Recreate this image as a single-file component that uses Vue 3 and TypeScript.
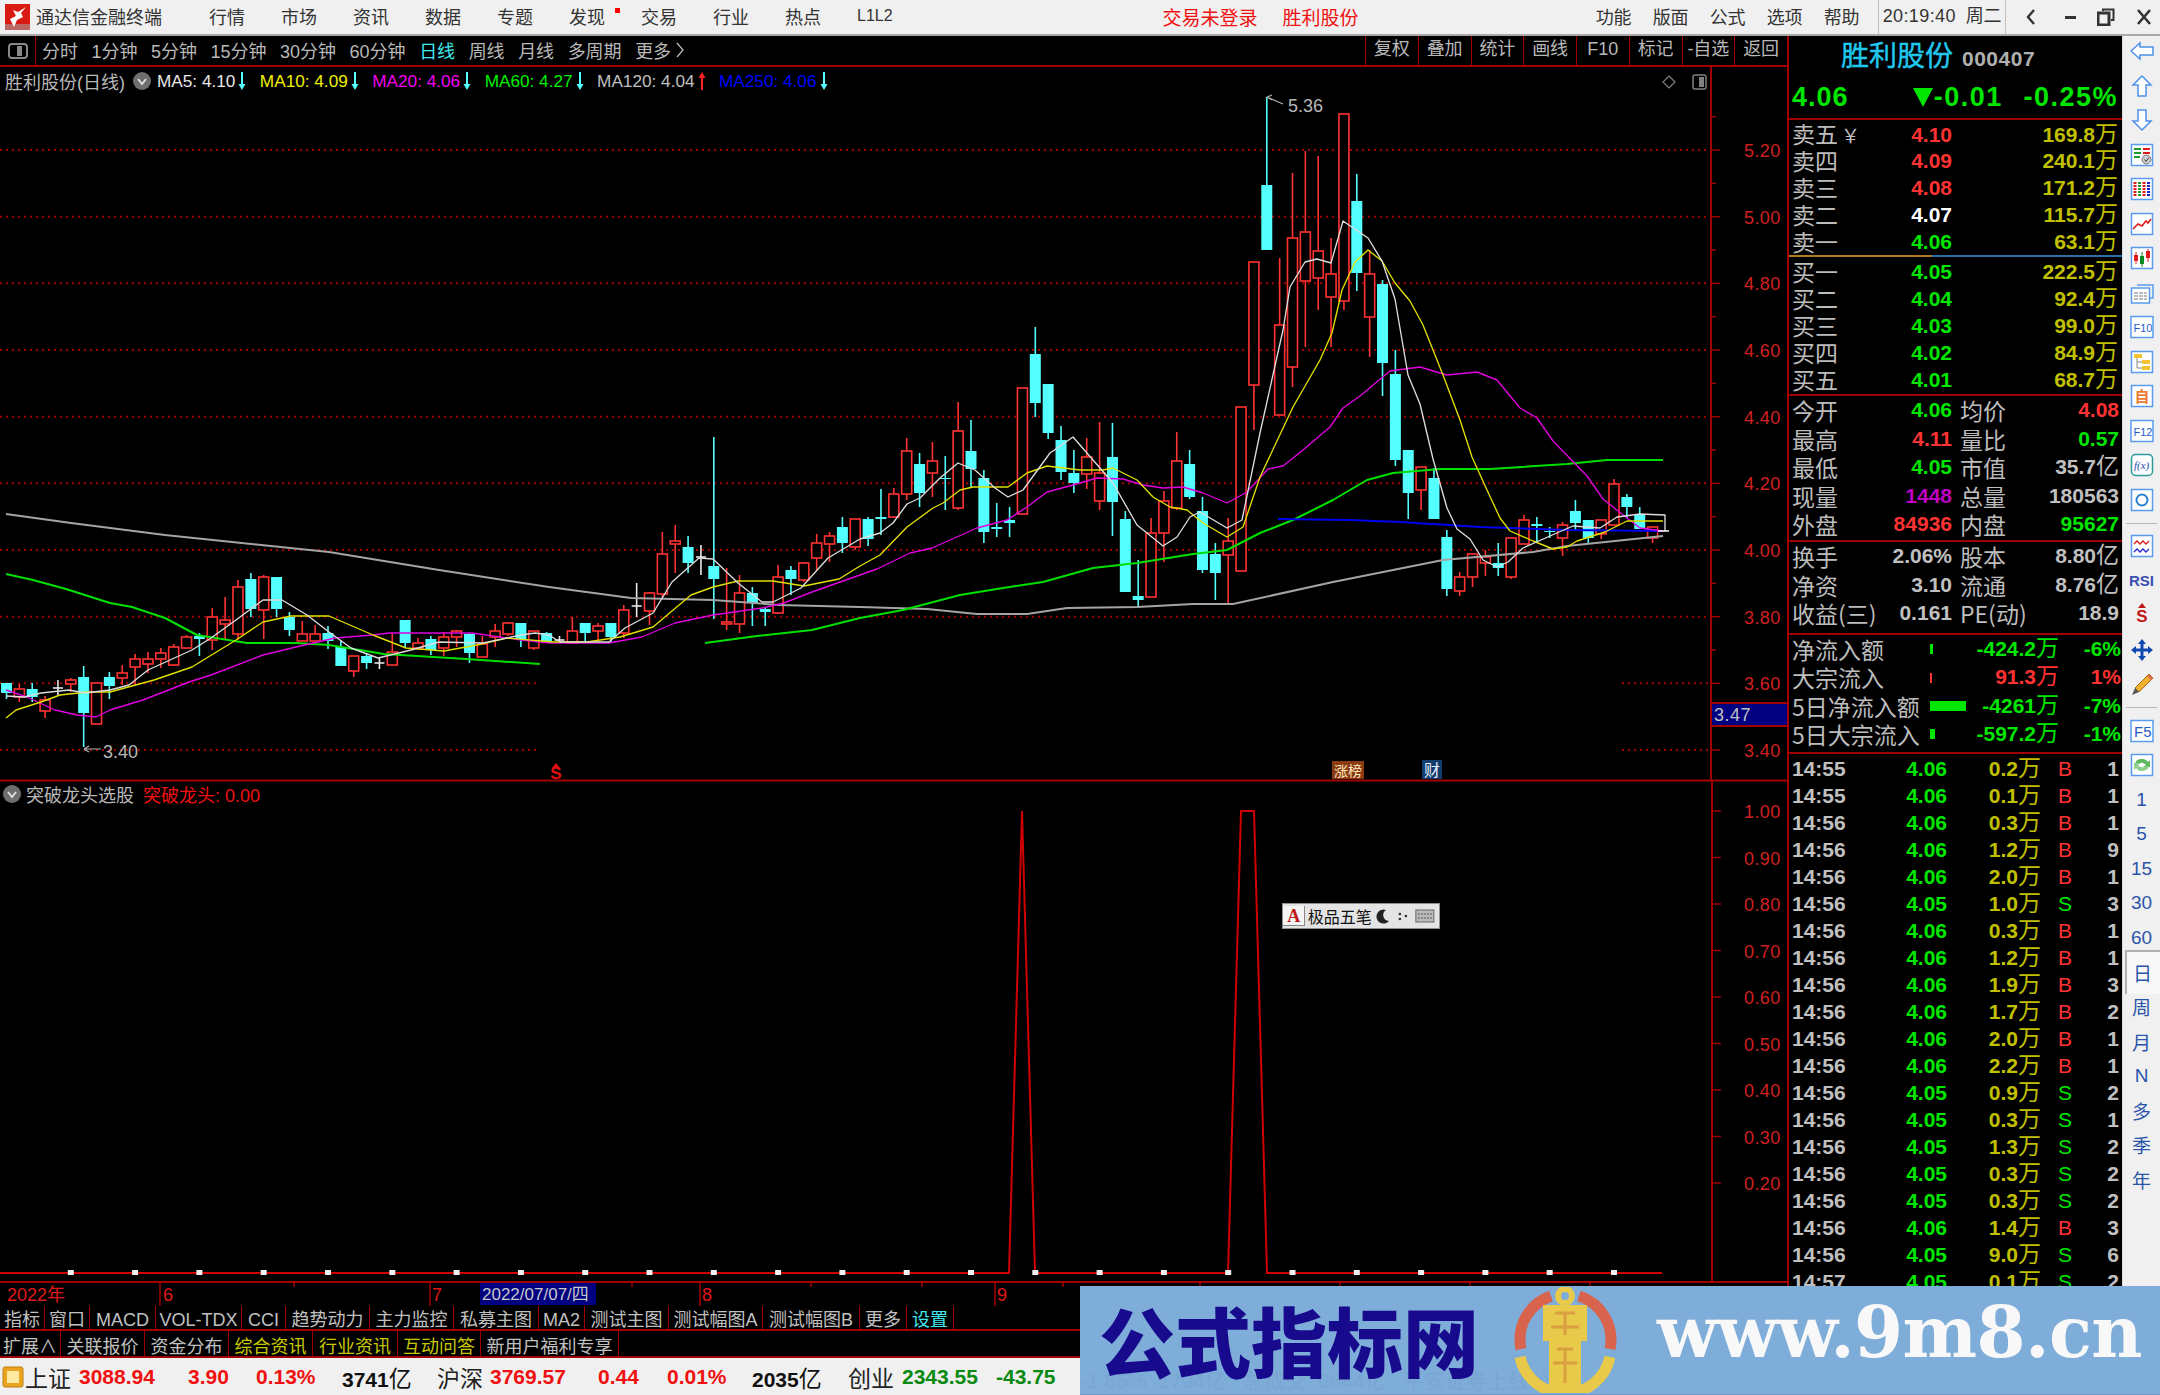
<template>
  <div class="app">
    <header class="titlebar">
      <svg class="logo" viewBox="0 0 25 26">
        <rect width="25" height="26" fill="#d81a12" />
        <rect y="20" width="25" height="6" fill="#a8a8a8" opacity=".55" />
        <path d="M21 3 L13 8 L8 6 L11 12 L5 15 L9 23 L12 16 L18 13 L16 9 Z" fill="#fff" />
      </svg>
      <span class="apptitle">通达信金融终端</span>
      <nav class="menu">
        <span v-for="m in menus" :key="m" class="menu-item">{{ m }}<i v-if="m === '发现'" class="dot" /></span>
        <span class="menu-item l1">L1L2</span>
      </nav>
      <span class="notice first">交易未登录</span>
      <span class="notice">胜利股份</span>
      <nav class="menu right">
        <span v-for="m in rightMenus" :key="m" class="menu-item">{{ m }}</span>
      </nav>
      <span class="clock">20:19:40</span>
      <span class="week">周二</span>
      <div class="winbtns">
        <svg viewBox="0 0 12 18"><path d="M9 2 L3 9 L9 16" fill="none" stroke="#333" stroke-width="2.4" /></svg>
        <svg viewBox="0 0 12 18"><rect x="0" y="8" width="11" height="3" fill="#333" /></svg>
        <svg viewBox="0 0 18 18"><rect x="1" y="5" width="11" height="12" fill="none" stroke="#333" stroke-width="3" /><path d="M6 3 V1.5 H16.5 V12 H14" fill="none" stroke="#333" stroke-width="2" /></svg>
        <svg viewBox="0 0 16 18"><path d="M2 2 L14 16 M14 2 L2 16" stroke="#333" stroke-width="2.6" /></svg>
      </div>
    </header>

    <div class="body">
      <section class="left">
        <div class="strip">
          <div class="strip-icon"><svg viewBox="0 0 20 16"><rect x="1" y="1" width="18" height="14" rx="3" fill="none" stroke="#888" stroke-width="2" /><rect x="9" y="3" width="5" height="10" fill="#888" /></svg></div>
          <div class="periods">
            <span v-for="p in periods" :key="p" :class="{ on: p === '日线' }">{{ p }}</span>
            <span class="more">更多<svg viewBox="0 0 8 16"><path d="M1 1 L7 8 L1 15" fill="none" stroke="#b8b8b8" stroke-width="1.3" /></svg></span>
          </div>
          <div class="tools">
            <span v-for="t in tools" :key="t">{{ t }}</span>
          </div>
        </div>

        <div class="chart">
          <svg class="plot" viewBox="0 67 1787 1239" width="1787" height="1239">
            <!-- price grid -->
            <line v-for="g in gridFull" :key="g" x1="0" :y1="g" x2="1710" :y2="g" class="dots" />
            <template v-for="g in gridPart" :key="g">
              <line x1="0" :y1="g" x2="540" :y2="g" class="dots" />
              <line x1="1622" :y1="g" x2="1710" :y2="g" class="dots" />
            </template>

            <!-- candles -->
            <g v-for="c in candles" :key="c.i">
              <template v-if="c.t === 'u'">
                <line :x1="c.x" :y1="c.h" :x2="c.x" :y2="c.top" class="wick-u" />
                <line :x1="c.x" :y1="c.bot" :x2="c.x" :y2="c.l" class="wick-u" />
                <rect :x="c.x - 5" :y="c.top" width="10" :height="c.bot - c.top" class="body-u" />
              </template>
              <template v-else-if="c.t === 'd'">
                <line :x1="c.x" :y1="c.h" :x2="c.x" :y2="c.l" class="wick-d" />
                <rect :x="c.x - 5.5" :y="c.top" width="11" :height="c.bot - c.top" class="body-d" />
              </template>
              <template v-else>
                <line :x1="c.x" :y1="c.h" :x2="c.x" :y2="c.l" class="wick-w" />
                <line :x1="c.x - 5" :y1="c.top" :x2="c.x + 5" :y2="c.top" class="wick-w" />
              </template>
            </g>

            <!-- moving averages -->
            <polyline class="ma thick" stroke="#a4a4a4" :points="ma120a" />
            <polyline class="ma thick" stroke="#00e000" :points="ma60a" />
            <polyline class="ma thick" stroke="#00e000" :points="ma60b" />
            <polyline class="ma thick" stroke="#0000f0" :points="ma250" />
            <polyline class="ma" stroke="#e000e0" :points="ma20" />
            <polyline class="ma" stroke="#e0e000" :points="ma10" />
            <polyline class="ma" stroke="#dcdcdc" :points="ma5" />
            <line x1="1658" y1="531" x2="1669" y2="531" stroke="#fff" stroke-width="1.5" />

            <!-- high / low labels -->
            <path d="M1267 97 L1283 104 M1267 97 l5 -2 M1267 97 l5 3" stroke="#b0b0b0" stroke-width="1.2" fill="none" />
            <text x="1288" y="112" class="note">5.36</text>
            <path d="M84 749 H101 M84 749 l5 -3 M84 749 l5 3" stroke="#b0b0b0" stroke-width="1.2" fill="none" />
            <text x="103" y="758" class="note">3.40</text>

            <!-- event markers -->
            <path d="M556 763 l4 5 h-8 z" fill="#e01010" />
            <text x="556" y="779" class="dollar">S</text>
            <rect x="1332" y="761" width="32" height="18" fill="#8a3a10" />
            <text x="1334" y="776" class="evt evt-up">涨榜</text>
            <rect x="1422" y="760" width="20" height="19" fill="#123c6c" />
            <text x="1424" y="776" class="evt evt-cai">财</text>

            <!-- top right chart icons -->
            <path d="M1669 76 l6 6 l-6 6 l-6 -6 z" fill="none" stroke="#808080" stroke-width="1.2" />
            <rect x="1693" y="75" width="13" height="14" rx="2" fill="none" stroke="#808080" stroke-width="1.5" />
            <rect x="1699" y="77" width="5" height="10" fill="#808080" />

            <!-- price axis -->
            <line x1="1711" y1="67" x2="1711" y2="780" class="axis" />
            <line v-for="t in priceTicks" :key="t.y" x1="1711" :y1="t.y" :x2="t.major ? 1720 : 1716" :y2="t.y" class="axis-thin" />
            <text v-for="t in priceLabels" :key="t.t" x="1744" :y="t.y + 7" class="axis-label">{{ t.t }}</text>
            <rect x="1712" y="703" width="75" height="23" fill="#000080" />
            <line x1="1712" y1="703" x2="1787" y2="703" class="axis" />
            <line x1="1712" y1="726" x2="1787" y2="726" class="axis" />
            <text x="1714" y="721" class="flag">3.47</text>

            <line x1="0" y1="780.5" x2="1787" y2="780.5" class="axis" />

            <!-- indicator pane -->
            <line x1="1712" y1="781" x2="1712" y2="1282" class="axis" />
            <line v-for="t in indLabels" :key="t.t" x1="1712" :y1="t.y" x2="1721" :y2="t.y" class="axis-thin" />
            <text v-for="t in indLabels" :key="'l' + t.t" x="1744" :y="t.y + 7" class="axis-label">{{ t.t }}</text>
            <polyline :points="indLine" fill="none" stroke="#d00000" stroke-width="2" />
            <rect v-for="x in indMarks" :key="x" :x="x - 3" y="1270" width="6" height="5" fill="#f0f0f0" />

            <!-- time axis -->
            <line x1="0" y1="1282" x2="1787" y2="1282" class="axis" />
            <line v-for="x in timeSeps" :key="x" :x1="x" y1="1282" :x2="x" y2="1306" class="axis-thin" />
            <line v-for="x in timeTicks" :key="x" :x1="x" y1="1282" :x2="x" y2="1287" class="axis-thin" />
            <text x="7" y="1301" class="time">2022年</text>
            <text x="163" y="1301" class="time">6</text>
            <text x="432" y="1301" class="time">7</text>
            <rect x="480" y="1283" width="116" height="22" fill="#000080" />
            <text x="482" y="1300" class="date">2022/07/07/四</text>
            <text x="702" y="1301" class="time">8</text>
            <text x="997" y="1301" class="time">9</text>
          </svg>

          <div class="legend">
            <span class="stock">胜利股份(日线)</span>
            <svg class="chev" viewBox="0 0 18 18"><circle cx="9" cy="9" r="9" fill="#6e6e6e" /><path d="M5 7 L9 12 L13 7" fill="none" stroke="#ddd" stroke-width="2" /></svg>
            <span v-for="m in mas" :key="m.t" class="ma-item" :style="{ color: m.c }">
              {{ m.t }}
              <svg class="arr" viewBox="0 0 8 20"><path v-if="m.up" d="M4 1 L7.5 7 H5 V19 H3 V7 H.5 Z" fill="#ff2020" /><path v-else d="M3 1 H5 V13 H7.5 L4 19 L.5 13 H3 Z" fill="#54ffff" /></svg>
            </span>
          </div>

          <div class="ind-title">
            <svg class="chev" viewBox="0 0 18 18"><circle cx="9" cy="9" r="9" fill="#6e6e6e" /><path d="M5 7 L9 12 L13 7" fill="none" stroke="#ddd" stroke-width="2" /></svg>
            <span class="stock">突破龙头选股</span>
            <span class="ind-val">突破龙头: 0.00</span>
          </div>

          <div class="ime">
            <b class="ime-a">A</b>
            <span class="ime-t">极品五笔</span>
            <svg viewBox="0 0 14 18"><path d="M9 3 a7 7 0 1 0 3 11 a6 6 0 0 1 -3 -11 Z" fill="#222" /></svg>
            <svg viewBox="0 0 14 18"><circle cx="4" cy="7" r="1.3" fill="#333" /><circle cx="4" cy="12" r="1.3" fill="#333" /><circle cx="10" cy="9" r="1.3" fill="#333" /></svg>
            <svg class="ime-k" viewBox="0 0 20 16"><rect x="1" y="2" width="18" height="12" fill="#bbb" stroke="#666" /><path d="M3 6 H17 M3 10 H17" stroke="#555" stroke-dasharray="2 1" /></svg>
          </div>
        </div>

        <div class="tabs first">
          <span v-for="t in tabsA" :key="t.t" class="tab" :class="t.c" :style="{ width: t.w + 'px' }">{{ t.t }}</span>
        </div>
        <div class="tabs second">
          <span v-for="t in tabsB" :key="t.t" class="tab" :class="t.c" :style="{ width: t.w + 'px' }">{{ t.t }}</span>
        </div>
      </section>

      <aside class="panel">
        <div class="head">
          <span class="name">胜利股份</span>
          <span class="code">000407</span>
        </div>
        <div class="quote sec">
          <span class="q1">4.06</span>
          <span class="q2"><i class="tri" />-0.01</span>
          <span class="q3">-0.25%</span>
        </div>

        <div class="book">
          <div v-for="r in sells" :key="r.l" class="book-row">
            <span class="lab">{{ r.l }}<em v-if="r.l === '卖五'" class="yen">￥</em></span>
            <span class="num" :class="r.c">{{ r.p }}</span>
            <span class="num y">{{ r.v }}<span class="u">万</span></span>
          </div>
        </div>
        <div class="midline" />
        <div class="book pad sec">
          <div v-for="r in buys" :key="r.l" class="book-row">
            <span class="lab">{{ r.l }}</span>
            <span class="num g">{{ r.p }}</span>
            <span class="num y">{{ r.v }}<span class="u">万</span></span>
          </div>
        </div>

        <div class="stats s1 sec">
          <div v-for="r in statsA" :key="r[0]" class="stat-row">
            <span class="lab">{{ r[0] }}</span>
            <span class="num" :class="r[2]">{{ r[1] }}</span>
            <span class="lab l2">{{ r[3] }}</span>
            <span class="num" :class="r[5]">{{ r[4] }}<span v-if="r[6]" class="u">{{ r[6] }}</span></span>
          </div>
        </div>
        <div class="stats s2 sec">
          <div v-for="r in statsB" :key="r[0]" class="stat-row">
            <span class="lab">{{ r[0] }}</span>
            <span class="num" :class="r[2]">{{ r[1] }}</span>
            <span class="lab l2">{{ r[3] }}</span>
            <span class="num" :class="r[5]">{{ r[4] }}<span v-if="r[6]" class="u">{{ r[6] }}</span></span>
          </div>
        </div>

        <div class="flows sec">
          <div v-for="r in flows" :key="r.l" class="flow-row">
            <span class="lab">{{ r.l }}</span>
            <span class="bar-cell"><i :class="r.c === 'r' ? 'bar-r' : 'bar-g'" :style="{ width: r.b + 'px' }" /></span>
            <span class="num" :class="r.c">{{ r.v }}<span class="u">万</span></span>
            <span class="num" :class="r.c">{{ r.p }}</span>
          </div>
        </div>

        <div class="ticks">
          <div v-for="(r, i) in ticks" :key="i" class="tick-row">
            <span class="num gy">{{ r[0] }}</span>
            <span class="num g">{{ r[1] }}</span>
            <span class="num y">{{ r[2] }}<span class="u">万</span></span>
            <span class="bs" :class="r[3] === 'B' ? 'r' : 'g'">{{ r[3] }}</span>
            <span class="num gy">{{ r[4] }}</span>
          </div>
        </div>
      </aside>

      <aside class="toolbar">
        <div class="it"><svg class="ic" viewBox="0 0 24 24"><polygon points="1,12 10,4 10,8 23,8 23,16 10,16 10,20" class="arrow" /></svg></div>
        <div class="it"><svg class="ic" viewBox="0 0 24 24"><polygon points="12,2 21,11 16,11 16,22 8,22 8,11 3,11" class="arrow" /></svg></div>
        <div class="it"><svg class="ic" viewBox="0 0 24 24"><polygon points="12,22 21,13 16,13 16,2 8,2 8,13 3,13" class="arrow" /></svg></div>
        <div class="it"><svg class="ic" viewBox="0 0 24 24"><rect x="1.5" y="1.5" width="21" height="21" class="frame" /><path d="M4 6 H11 M4 10 H11 M4 14 H10" stroke="#1a9a2a" stroke-width="2" /><path d="M13 6 H20 M13 10 H20" stroke="#e01a1a" stroke-width="2" /><circle cx="16.5" cy="16.5" r="4.5" fill="#ccc" stroke="#777" /><path d="M14.5 16.5 l1.5 2 l3 -4" stroke="#444" fill="none" /></svg></div>
        <div class="it"><svg class="ic" viewBox="0 0 24 24"><rect x="1.5" y="1.5" width="21" height="21" class="frame" /><path d="M5 5 V19" stroke="#e01a1a" stroke-width="3" stroke-dasharray="2 1" /><path d="M9.5 5 V19" stroke="#1a9a2a" stroke-width="3" stroke-dasharray="2 1" /><path d="M14 5 V19" stroke="#e01a1a" stroke-width="3" stroke-dasharray="2 1" /><path d="M18.5 5 V19" stroke="#2020d0" stroke-width="3" stroke-dasharray="2 1" /></svg></div>
        <div class="it"><svg class="ic" viewBox="0 0 24 24"><rect x="1.5" y="1.5" width="21" height="21" class="frame" /><path d="M3 17 L8 12 L12 14 L16 9 L18 11 L21 7" fill="none" stroke="#e01a1a" stroke-width="1.6" /></svg></div>
        <div class="it"><svg class="ic" viewBox="0 0 24 24"><rect x="1.5" y="1.5" width="21" height="21" class="frame" /><path d="M6 6 V18 M18 3 V16" stroke="#e01a1a" /><path d="M12 6 V21" stroke="#0a8a20" /><rect x="4" y="9" width="4" height="6" fill="#e01a1a" /><rect x="10" y="10" width="4" height="8" fill="#0a8a20" /><rect x="16" y="5" width="4" height="7" fill="#e01a1a" /></svg></div>
        <div class="it"><svg class="ic" viewBox="0 0 24 24"><path d="M7 4 H23 V17 H20" fill="none" stroke="#5a9bf0" stroke-width="1.5" /><rect x="1.5" y="7" width="18" height="15" class="frame" /><path d="M4 12 H17 M4 15 H17 M4 18 H17" stroke="#777" stroke-dasharray="4 1" /></svg></div>
        <div class="it"><svg class="ic" viewBox="0 0 24 24"><rect x="1" y="1.5" width="22" height="21" class="frame" /><text x="3.5" y="17" class="ic-t">F10</text></svg></div>
        <div class="it"><svg class="ic" viewBox="0 0 24 24"><rect x="1.5" y="1.5" width="21" height="21" class="frame" /><path d="M7 7 V18 H12 M7 12 H12" stroke="#888" fill="none" /><rect x="4" y="4" width="8" height="4" fill="#f4c330" /><rect x="12" y="10" width="8" height="4" fill="#f4c330" /><rect x="12" y="16" width="8" height="4" fill="#f4c330" /></svg></div>
        <div class="it"><svg class="ic" viewBox="0 0 24 24"><rect x="1.5" y="1.5" width="21" height="21" class="frame" /><text x="4.5" y="18" class="ic-z">自</text></svg></div>
        <div class="it"><svg class="ic" viewBox="0 0 24 24"><rect x="1" y="1.5" width="22" height="21" class="frame" /><text x="3.5" y="17" class="ic-t">F12</text></svg></div>
        <div class="it"><svg class="ic" viewBox="0 0 24 24"><rect x="1.5" y="1.5" width="21" height="21" rx="4" fill="#fff" stroke="#2a9a9a" stroke-width="1.5" /><text x="4" y="16" class="ic-f">f(x)</text></svg></div>
        <div class="it"><svg class="ic" viewBox="0 0 24 24"><rect x="1.5" y="1.5" width="21" height="21" class="frame" /><circle cx="12" cy="12" r="5.5" fill="none" stroke="#2a80d0" stroke-width="2" /></svg></div>
        <div class="sep" />
        <div class="it"><svg class="ic" viewBox="0 0 24 24"><rect x="1.5" y="1.5" width="21" height="21" class="frame" /><path d="M4 10 l3 -3 l3 3 l3 -3 l3 3 l3 -3" fill="none" stroke="#e01a1a" stroke-width="1.4" /><path d="M4 18 l3 -3 l3 3 l3 -3 l3 3 l3 -3" fill="none" stroke="#2a2ad0" stroke-width="1.4" /></svg></div>
        <div class="it"><span class="rsi">RSI</span></div>
        <div class="it"><svg class="ic" viewBox="0 0 24 24"><path d="M12 0 l4 5 h-8 z" fill="#c01818" /><text x="12" y="19" class="ic-s">S</text></svg></div>
        <div class="it"><svg class="ic" viewBox="0 0 24 24"><path d="M12 1 l4 5 h-2.5 v4.5 h4.5 v-2.5 l5 4 l-5 4 v-2.5 h-4.5 v4.5 h2.5 l-4 5 l-4 -5 h2.5 v-4.5 h-4.5 v2.5 l-5 -4 l5 -4 v2.5 h4.5 v-4.5 h-2.5 z" fill="#1048b0" /></svg></div>
        <div class="it"><svg class="ic" viewBox="0 0 24 24"><path d="M19 2 L23 6 L9 20 L5 16 Z" fill="#f0b030" stroke="#a06a10" /><path d="M5 16 L2 23 L9 20 Z" fill="#555" /><path d="M19 2 L23 6 L21 8 L17 4 Z" fill="#e06a50" /></svg></div>
        <div class="sep" />
        <div class="it"><svg class="ic" viewBox="0 0 24 24"><rect x="1" y="1.5" width="22" height="21" class="frame" /><text x="4" y="18" class="ic-t big">F5</text></svg></div>
        <div class="it"><svg class="ic" viewBox="0 0 24 24"><rect x="1.5" y="1.5" width="21" height="21" class="frame" /><path d="M5 11 a7 6 0 0 1 13 -2 l2 -2 v7 h-7 l3 -2 a5 4 0 0 0 -8 -1 z" fill="#5cb85c" /><path d="M19 13 a7 6 0 0 1 -13 2 l-2 2 v-7 h7 l-3 2 a5 4 0 0 0 8 1 z" fill="#8ed08e" /></svg></div>
        <div v-for="t in tbText" :key="t" class="it txt" :class="{ active: t === '日' }">{{ t }}</div>
      </aside>
    </div>

    <footer class="status">
      <svg class="st-ic" viewBox="0 0 22 22"><rect x="1" y="1" width="20" height="20" rx="2" fill="#eaa520" stroke="#c08010" /><rect x="5" y="5" width="12" height="12" fill="#ffe9a0" /></svg>
      <span v-for="s in statusItems" :key="s.t" class="st" :class="s.c" :style="{ width: s.w + 'px' }">{{ s.t }}<span v-if="s.u" class="st-u">{{ s.u }}</span></span>
    </footer>

    <div class="wm">
      <span class="wm-ghost">-1.85%&#160;&#160;1794亿&#160;&#160;&#160;总成交&#160;&#160;6644亿&#160;&#160;&#160;平安证券上线公告</span>
      <span class="wm-cn">公式指标网</span>
      <svg class="wm-logo" viewBox="0 0 104 106">
        <path d="M 8 62 A 46 46 0 0 1 38 9" fill="none" stroke="#d8644e" stroke-width="11" />
        <path d="M 66 9 A 46 46 0 0 1 97 62" fill="none" stroke="#d8644e" stroke-width="11" />
        <path d="M 7 70 A 46 46 0 0 0 97 70" fill="none" stroke="#e8c94a" stroke-width="11" />
        <circle cx="52" cy="9" r="7" fill="none" stroke="#e8c94a" stroke-width="6" />
        <rect x="30" y="18" width="44" height="36" fill="#e8c94a" />
        <rect x="36" y="54" width="32" height="48" fill="#e8c94a" />
        <path d="M42 26 H62 M52 26 V48 M38 40 H66 M44 62 H60 M52 62 V96 M40 76 H64" stroke="#d9a040" stroke-width="3" />
      </svg>
      <span class="wm-url">www.9m8.cn</span>
    </div>
  </div>
</template>

<script setup lang="ts">
const menus = ['行情', '市场', '资讯', '数据', '专题', '发现', '交易', '行业', '热点']
const rightMenus = ['功能', '版面', '公式', '选项', '帮助']
const periods = ['分时', '1分钟', '5分钟', '15分钟', '30分钟', '60分钟', '日线', '周线', '月线', '多周期']
const tools = ['复权', '叠加', '统计', '画线', 'F10', '标记', '-自选', '返回']

const mas = [
  { t: 'MA5: 4.10', c: '#e8e8e8', up: false },
  { t: 'MA10: 4.09', c: '#f0f000', up: false },
  { t: 'MA20: 4.06', c: '#f000f0', up: false },
  { t: 'MA60: 4.27', c: '#00f000', up: false },
  { t: 'MA120: 4.04', c: '#c0c0c0', up: true },
  { t: 'MA250: 4.06', c: '#0000ff', up: false },
]

// top, bottom, high, low, type - pixel rows read off the reference
const raw: [number, number, number, number, string][] = [
  [683, 693, 683, 699, 'd'], [689, 697, 684, 702, 'u'], [689, 697, 683, 702, 'd'], [700, 711, 696, 718, 'u'],
  [688, 688, 680, 695, 'w'], [680, 684, 678, 692, 'u'], [677, 713, 666, 747, 'd'], [683, 724, 683, 724, 'u'],
  [677, 686, 672, 699, 'd'], [673, 678, 665, 685, 'u'], [659, 667, 654, 685, 'u'], [659, 664, 652, 673, 'u'],
  [653, 659, 648, 668, 'u'], [647, 665, 644, 666, 'u'], [637, 648, 635, 649, 'u'], [636, 639, 633, 656, 'd'],
  [617, 640, 608, 650, 'u'], [620, 624, 597, 640, 'u'], [587, 634, 580, 640, 'u'], [579, 609, 573, 617, 'd'],
  [577, 610, 575, 639, 'u'], [577, 609, 577, 617, 'd'], [617, 630, 612, 636, 'd'], [634, 641, 621, 641, 'u'],
  [634, 641, 625, 641, 'u'], [633, 641, 626, 649, 'd'], [647, 666, 640, 666, 'd'], [656, 671, 656, 677, 'u'],
  [656, 663, 653, 669, 'd'], [663, 663, 658, 669, 'w'], [652, 665, 633, 665, 'u'], [620, 643, 620, 647, 'd'],
  [643, 648, 638, 650, 'u'], [639, 650, 636, 655, 'd'], [637, 648, 632, 656, 'u'], [631, 637, 630, 647, 'u'],
  [634, 653, 633, 663, 'd'], [644, 657, 636, 657, 'u'], [631, 637, 624, 647, 'u'], [623, 634, 622, 636, 'u'],
  [623, 639, 623, 647, 'd'], [631, 648, 631, 650, 'u'], [633, 643, 632, 643, 'd'], [640, 640, 636, 643, 'w'],
  [631, 643, 617, 643, 'u'], [623, 633, 623, 643, 'd'], [626, 631, 623, 643, 'u'], [623, 637, 623, 643, 'd'],
  [610, 633, 605, 638, 'u'], [606, 606, 583, 617, 'w'], [593, 611, 592, 625, 'u'], [554, 594, 532, 597, 'u'],
  [541, 544, 525, 573, 'u'], [547, 563, 536, 573, 'd'], [557, 557, 545, 575, 'w'], [566, 579, 437, 619, 'd'],
  [622, 624, 568, 630, 'u'], [593, 624, 575, 633, 'u'], [593, 603, 587, 626, 'd'], [609, 612, 607, 626, 'd'],
  [577, 613, 565, 614, 'u'], [570, 579, 566, 595, 'd'], [563, 580, 562, 582, 'u'], [543, 558, 534, 570, 'u'],
  [536, 544, 532, 562, 'u'], [527, 543, 517, 553, 'd'], [519, 547, 519, 550, 'u'], [519, 539, 517, 546, 'd'],
  [517, 519, 489, 535, 'd'], [494, 517, 488, 518, 'u'], [451, 494, 438, 500, 'u'], [464, 493, 453, 507, 'd'],
  [461, 473, 442, 497, 'u'], [478, 479, 456, 510, 'd'], [431, 508, 402, 510, 'u'], [451, 469, 420, 487, 'd'],
  [478, 532, 470, 543, 'd'], [527, 529, 503, 537, 'd'], [520, 523, 507, 537, 'd'], [388, 514, 388, 514, 'u'],
  [354, 403, 327, 417, 'd'], [384, 433, 384, 439, 'd'], [440, 472, 426, 480, 'd'], [473, 483, 450, 493, 'd'],
  [457, 474, 438, 489, 'u'], [473, 501, 422, 510, 'u'], [457, 502, 423, 536, 'd'], [519, 592, 511, 592, 'd'],
  [596, 600, 560, 606, 'd'], [533, 597, 518, 597, 'u'], [501, 533, 491, 562, 'u'], [461, 508, 432, 510, 'u'],
  [464, 497, 450, 499, 'd'], [511, 570, 497, 573, 'd'], [554, 573, 543, 600, 'd'], [541, 555, 518, 603, 'u'],
  [407, 571, 407, 571, 'u'], [262, 385, 262, 430, 'u'], [185, 250, 97, 250, 'd'], [325, 415, 258, 415, 'u'],
  [238, 367, 173, 387, 'u'], [232, 281, 151, 347, 'u'], [251, 278, 156, 310, 'u'], [274, 297, 238, 347, 'u'],
  [114, 301, 114, 310, 'u'], [201, 273, 174, 291, 'd'], [274, 317, 250, 357, 'u'], [284, 363, 280, 396, 'd'],
  [374, 460, 350, 466, 'd'], [450, 493, 450, 519, 'd'], [467, 490, 467, 510, 'u'], [478, 519, 468, 519, 'd'],
  [537, 589, 530, 596, 'd'], [577, 591, 572, 596, 'u'], [554, 577, 554, 587, 'u'], [557, 563, 550, 576, 'u'],
  [563, 568, 543, 576, 'd'], [538, 577, 538, 579, 'u'], [520, 544, 515, 544, 'u'], [524, 526, 517, 542, 'd'],
  [531, 532, 527, 538, 'd'], [525, 538, 522, 556, 'u'], [511, 523, 500, 530, 'd'], [520, 538, 520, 543, 'd'],
  [520, 534, 520, 539, 'u'], [484, 525, 479, 525, 'u'], [497, 507, 494, 518, 'd'], [514, 529, 507, 529, 'd'],
  [527, 538, 527, 543, 'u'],
]
const candles = raw.map((r, i) => ({
  i, x: 6.5 + 12.86 * i, top: r[0], bot: r[1], h: r[2], l: r[3], t: r[4],
}))

const ma5 = '6,696 25,697 41,693 69,690 85,693 110,690 129,685 148,670 192,650 211,638 236,620 263,600 282,600 307,615 329,632 351,648 378,658 411,650 439,642 483,643 521,635 535,633 549,635 560,642 609,642 625,628 653,613 672,582 699,558 713,559 738,583 762,602 773,602 801,588 828,558 860,539 880,533 893,523 907,504 920,498 940,478 958,463 975,470 995,488 1008,497 1023,490 1050,453 1073,437 1093,460 1113,483 1137,525 1163,546 1177,537 1190,517 1200,512 1227,528 1242,520 1260,433 1283,330 1290,287 1305,262 1317,259 1331,263 1343,221 1368,238 1382,261 1395,299 1408,375 1420,404 1433,459 1447,508 1457,529 1470,539 1483,560 1497,567 1508,562 1523,548 1550,536 1573,526 1600,528 1617,517 1640,514 1665,515 1665,531'
const ma10 = '6,718 16,710 41,702 60,695 88,692 110,692 154,680 192,667 236,640 263,622 291,616 329,616 373,635 406,648 444,651 477,645 507,638 554,642 587,642 620,637 653,627 691,595 713,587 738,581 773,581 804,586 839,579 860,566 880,555 907,527 933,508 943,503 960,490 973,487 1008,487 1027,473 1047,466 1080,470 1103,470 1113,468 1137,480 1153,497 1170,507 1187,510 1203,523 1227,537 1243,527 1260,477 1293,407 1320,360 1332,333 1342,290 1355,262 1368,250 1382,261 1395,283 1410,301 1423,325 1443,375 1460,420 1472,457 1487,490 1500,518 1510,531 1533,541 1553,549 1567,547 1577,541 1605,532 1627,521 1663,521'
const ma20 = '6,690 27,697 55,710 77,715 96,717 110,710 143,700 189,682 211,675 263,655 296,647 335,638 373,635 389,633 472,633 521,640 549,643 609,643 642,637 675,623 713,615 762,608 784,603 812,592 860,575 877,569 910,553 932,548 977,528 1007,520 1027,507 1047,492 1073,485 1097,478 1123,479 1143,485 1163,488 1183,487 1203,493 1227,503 1247,492 1268,469 1283,466 1303,450 1330,427 1343,408 1360,396 1390,371 1420,367 1447,375 1477,372 1497,380 1520,408 1537,418 1553,441 1587,476 1603,499 1627,518 1640,528 1663,531'
const ma60a = '6,574 33,580 66,589 110,603 132,607 165,618 197,635 247,643 296,643 329,645 384,654 466,659 540,664'
const ma60b = '705,643 757,636 812,630 860,618 903,610 960,595 1003,588 1043,582 1093,568 1137,563 1193,554 1227,550 1260,533 1293,520 1333,500 1367,480 1393,473 1440,469 1490,469 1567,464 1607,460 1663,460'
const ma120a = '6,514 71,523 165,535 329,552 439,570 549,587 631,598 713,600 779,605 860,607 927,609 977,614 1027,614 1067,608 1137,607 1193,604 1233,604 1333,582 1443,560 1533,552 1567,546 1663,536'
const ma250 = '1278,519 1350,520 1400,522 1480,527 1567,530 1663,531'

const yOf = (p: number) => 550 - (p - 4) * 333.3
const gridFull = [5.2, 5, 4.8, 4.6, 4.4, 4.2, 4, 3.8].map(yOf)
const gridPart = [3.6, 3.4].map(yOf)
const priceLabels = [5.2, 5, 4.8, 4.6, 4.4, 4.2, 4, 3.8, 3.6, 3.4].map((p) => ({ t: p.toFixed(2), y: yOf(p) }))
const priceTicks = Array.from({ length: 20 }, (_, i) => ({ y: yOf(5.3 - i * 0.1), major: i % 2 === 1 }))
const indLabels = [1, 0.9, 0.8, 0.7, 0.6, 0.5, 0.4, 0.3, 0.2].map((v) => ({ t: v.toFixed(2), y: 811 + (1 - v) * 465 }))
const indLine = '0,1273 1009,1273 1022,811 1035,1273 1228,1273 1241,811 1254,811 1267,1273 1662,1273'
const indMarks = Array.from({ length: 25 }, (_, k) => 6.5 + 64.3 * (k + 1))
const timeSeps = [160, 430, 700, 995]
const timeTicks = [294, 632, 811, 922, 1063, 1200, 1340, 1470, 1590]

const sepsToWidths = (labels: string[], seps: number[]) =>
  labels.map((t, i) => ({
    t,
    w: seps[i] - (i ? seps[i - 1] : 0),
    c: t === '设置' ? 'cy' : ['综合资讯', '行业资讯', '互动问答'].includes(t) ? 'ye' : '',
  }))
const tabsA = sepsToWidths(
  ['指标', '窗口', 'MACD', 'VOL-TDX', 'CCI', '趋势动力', '主力监控', '私募主图', 'MA2', '测试主图', '测试幅图A', '测试幅图B', '更多', '设置'],
  [45, 90, 156, 242, 286, 370, 454, 539, 585, 669, 763, 860, 907, 954],
)
const tabsB = sepsToWidths(
  ['扩展∧', '关联报价', '资金分布', '综合资讯', '行业资讯', '互动问答', '新用户福利专享'],
  [61, 145, 229, 313, 398, 481, 619],
)

const sells = [
  { l: '卖五', p: '4.10', c: 'r', v: '169.8' },
  { l: '卖四', p: '4.09', c: 'r', v: '240.1' },
  { l: '卖三', p: '4.08', c: 'r', v: '171.2' },
  { l: '卖二', p: '4.07', c: 'w', v: '115.7' },
  { l: '卖一', p: '4.06', c: 'g', v: '63.1' },
]
const buys = [
  { l: '买一', p: '4.05', v: '222.5' },
  { l: '买二', p: '4.04', v: '92.4' },
  { l: '买三', p: '4.03', v: '99.0' },
  { l: '买四', p: '4.02', v: '84.9' },
  { l: '买五', p: '4.01', v: '68.7' },
]
const statsA = [
  ['今开', '4.06', 'g', '均价', '4.08', 'r', ''],
  ['最高', '4.11', 'r', '量比', '0.57', 'g', ''],
  ['最低', '4.05', 'g', '市值', '35.7', 'gy', '亿'],
  ['现量', '1448', 'm', '总量', '180563', 'gy', ''],
  ['外盘', '84936', 'r', '内盘', '95627', 'g', ''],
]
const statsB = [
  ['换手', '2.06%', 'gy', '股本', '8.80', 'gy', '亿'],
  ['净资', '3.10', 'gy', '流通', '8.76', 'gy', '亿'],
  ['收益(三)', '0.161', 'gy', 'PE(动)', '18.9', 'gy', ''],
]
const flows = [
  { l: '净流入额', b: 3, v: '-424.2', p: '-6%', c: 'g' },
  { l: '大宗流入', b: 2, v: '91.3', p: '1%', c: 'r' },
  { l: '5日净流入额', b: 36, v: '-4261', p: '-7%', c: 'g' },
  { l: '5日大宗流入', b: 5, v: '-597.2', p: '-1%', c: 'g' },
]
const ticks = [
  ['14:55', '4.06', '0.2', 'B', '1'], ['14:55', '4.06', '0.1', 'B', '1'], ['14:56', '4.06', '0.3', 'B', '1'],
  ['14:56', '4.06', '1.2', 'B', '9'], ['14:56', '4.06', '2.0', 'B', '1'], ['14:56', '4.05', '1.0', 'S', '3'],
  ['14:56', '4.06', '0.3', 'B', '1'], ['14:56', '4.06', '1.2', 'B', '1'], ['14:56', '4.06', '1.9', 'B', '3'],
  ['14:56', '4.06', '1.7', 'B', '2'], ['14:56', '4.06', '2.0', 'B', '1'], ['14:56', '4.06', '2.2', 'B', '1'],
  ['14:56', '4.05', '0.9', 'S', '2'], ['14:56', '4.05', '0.3', 'S', '1'], ['14:56', '4.05', '1.3', 'S', '2'],
  ['14:56', '4.05', '0.3', 'S', '2'], ['14:56', '4.05', '0.3', 'S', '2'], ['14:56', '4.06', '1.4', 'B', '3'],
  ['14:56', '4.05', '9.0', 'S', '6'], ['14:57', '4.05', '0.1', 'S', '2'],
]

const tbText = ['1', '5', '15', '30', '60', '日', '周', '月', 'N', '多', '季', '年']

const stRaw = [
  { x: 25, t: '上证', c: 'st-l' },
  { x: 79, t: '3088.94', c: 'st-r' },
  { x: 188, t: '3.90', c: 'st-r' },
  { x: 256, t: '0.13%', c: 'st-r' },
  { x: 342, t: '3741', u: '亿', c: 'st-k' },
  { x: 437, t: '沪深', c: 'st-l' },
  { x: 490, t: '3769.57', c: 'st-r' },
  { x: 598, t: '0.44', c: 'st-r' },
  { x: 667, t: '0.01%', c: 'st-r' },
  { x: 752, t: '2035', u: '亿', c: 'st-k' },
  { x: 848, t: '创业', c: 'st-l' },
  { x: 902, t: '2343.55', c: 'st-g' },
  { x: 996, t: '-43.75', c: 'st-g' },
  { x: 1081, t: '-1.85%', c: 'st-g' },
]
const statusItems = stRaw.map((s, i) => ({ ...s, w: (stRaw[i + 1]?.x ?? 1160) - s.x }))
</script>

<style scoped>
.app {
  position: relative;
  width: 2160px;
  height: 1395px;
  overflow: hidden;
  display: flex;
  flex-direction: column;
  background: #000;
  font-family: "Liberation Sans", "Noto Sans CJK SC", sans-serif;
  color: #c0c0c0;
}

/* title bar */
.titlebar {
  height: 34px;
  flex: none;
  display: flex;
  align-items: center;
  background: #f0f0f0;
  border-bottom: 2px solid #a8a8a8;
  color: #333;
  font-size: 18px;
}
.titlebar > span, .titlebar > nav { margin-top: -2px; }
.logo { width: 25px; height: 26px; margin-left: 5px; flex: none; }
.apptitle { margin-left: 6px; width: 126px; white-space: nowrap; }
.menu { display: flex; gap: 36px; margin-left: 47px; }
.menu.right { gap: 21px; margin-left: 237px; }
.menu-item { position: relative; white-space: nowrap; }
.menu-item.l1 { font-size: 16px; line-height: 26px; }
.dot { position: absolute; left: 46px; top: 5px; width: 5px; height: 5px; background: #f00; }
.notice { color: #f01010; font-size: 19px; margin-left: 25px; white-space: nowrap; }
.notice.first { margin-left: 270px; }
.clock { margin-left: 18px; padding-left: 4px; border-left: 1px solid #c0c0c0; line-height: 36px; width: 83px; letter-spacing: .4px; }
.week { width: 39px; line-height: 36px; border-right: 1px solid #c0c0c0; }
.winbtns { flex: 1; display: flex; align-items: center; }
.winbtns svg { height: 18px; }
.winbtns svg:nth-child(1) { width: 12px; margin-left: 19px; }
.winbtns svg:nth-child(2) { width: 12px; margin-left: 28px; }
.winbtns svg:nth-child(3) { width: 18px; margin-left: 20px; }
.winbtns svg:nth-child(4) { width: 16px; margin-left: 21px; }

.body { flex: 1; min-height: 0; display: flex; }

/* left part */
.left { width: 1787px; flex: none; display: flex; flex-direction: column; }
.strip {
  height: 29px;
  flex: none;
  display: flex;
  align-items: stretch;
  border-bottom: 2px solid #a00000;
  font-size: 18px;
  color: #b8b8b8;
  white-space: nowrap;
}
.strip-icon { width: 35px; flex: none; border-right: 1px solid #a00000; display: flex; align-items: center; justify-content: center; }
.strip-icon svg { width: 20px; height: 16px; }
.periods { display: flex; gap: 13.5px; align-items: center; padding-left: 6px; padding-bottom: 2px; }
.periods .on { color: #40e8f0; }
.more { display: flex; align-items: center; gap: 5px; }
.more svg { width: 8px; height: 16px; }
.tools { margin-left: auto; display: flex; }
.tools span { width: 52.75px; border-left: 1px solid #a00000; text-align: center; line-height: 27px; box-sizing: border-box; }

.chart { position: relative; height: 1239px; flex: none; }
.plot { display: block; }
.dots { stroke: #a00000; stroke-width: 2; stroke-dasharray: 2 4; }
.wick-u { stroke: #ff3232; stroke-width: 1.6; }
.wick-d { stroke: #54ffff; stroke-width: 1.6; }
.wick-w { stroke: #e8e8e8; stroke-width: 1.6; }
.body-u { fill: #000; stroke: #ff3232; stroke-width: 1.6; }
.body-d { fill: #54ffff; }
.ma { fill: none; stroke-width: 1.35; stroke-linejoin: round; }
.ma.thick { stroke-width: 2; }
.note { fill: #b8b8b8; font-size: 18px; }
.dollar { fill: #e01010; font-size: 17px; font-weight: 700; text-anchor: middle; }
.evt { font-size: 14px; font-family: "Noto Sans CJK SC", sans-serif; }
.evt-up { fill: #ffe8c0; }
.evt-cai { fill: #e8f0ff; font-size: 16px; }
.axis { stroke: #a00000; stroke-width: 2; }
.axis-thin { stroke: #a00000; stroke-width: 1.5; }
.axis-label { fill: #d02020; font-size: 18px; letter-spacing: .4px; }
.flag { fill: #c0c0c0; font-size: 18px; letter-spacing: .5px; }
.time { fill: #e01818; font-size: 18px; font-family: "Liberation Sans", "Noto Sans CJK SC", sans-serif; }
.date { fill: #c8c8c8; font-size: 17px; font-family: "Liberation Sans", "Noto Sans CJK SC", sans-serif; }

.legend {
  position: absolute;
  left: 5px;
  top: 0;
  display: flex;
  align-items: center;
  height: 28px;
  font-size: 17.2px;
  white-space: nowrap;
}
.stock { font-size: 18px; color: #b8b8b8; }
.chev { width: 18px; height: 18px; margin: 0 6px 0 8px; flex: none; }
.ma-item { display: flex; align-items: center; gap: 3px; margin-right: 13.5px; }
.arr { width: 8px; height: 20px; }
.ind-title {
  position: absolute;
  left: -5px;
  top: 715px;
  display: flex;
  align-items: center;
  height: 24px;
  white-space: nowrap;
}
.ind-title .stock { margin-left: -1px; }
.ind-val { color: #f01010; font-size: 18px; margin-left: 9px; }
.ime {
  position: absolute;
  left: 1282px;
  top: 836px;
  width: 158px;
  height: 26px;
  display: flex;
  align-items: center;
  box-sizing: border-box;
  background: #e4e4e4;
  border: 1px solid #909090;
  color: #111;
  font-size: 16px;
  white-space: nowrap;
}
.ime-a { color: #c01818; width: 22px; height: 20px; line-height: 20px; text-align: center; font-family: "Liberation Serif", serif; font-size: 18px; background: #f4f4f4; box-shadow: inset -1px -1px 0 #888; }
.ime-t { width: 72px; padding-left: 3px; box-sizing: border-box; }
.ime svg { width: 16px; height: 18px; margin-right: 3px; }
.ime .ime-k { width: 22px; height: 16px; margin-left: 1px; }

.tabs { display: flex; flex: none; font-size: 18px; white-space: nowrap; }
.tabs.first { height: 25px; border-bottom: 2px solid #a00000; box-sizing: border-box; }
.tabs.second { height: 27px; border-bottom: 2px solid #a00000; box-sizing: border-box; }
.tab { box-sizing: border-box; border-right: 1px solid #a00000; text-align: center; line-height: 23px; padding-top: 2.5px; flex: none; overflow: hidden; }
.tabs.second .tab { line-height: 25px; padding-top: 4px; }
.tab.cy { color: #40e8f0; }
.tab.ye { color: #c8c800; }

/* right quote panel */
.panel {
  width: 335px;
  flex: none;
  border-left: 2px solid #a00000;
  box-sizing: border-box;
  overflow: hidden;
  font-size: 21px;
}
.sec { border-bottom: 2px solid #a00000; box-sizing: border-box; }
.head { height: 44px; display: flex; align-items: center; padding-left: 52px; white-space: nowrap; padding-bottom: 3px; box-sizing: border-box; }
.name { font-size: 28px; color: #20c8ee; line-height: 38px; -webkit-text-stroke: .4px #20c8ee; }
.code { font-size: 21px; color: #b0b0b0; font-weight: 700; margin-left: 9px; margin-top: 5px; letter-spacing: .5px; }
.quote { height: 40px; display: flex; align-items: center; padding: 0 4px 3px 3px; color: #00e600; font-weight: 700; font-size: 27px; white-space: nowrap; }
.q1 { width: 121px; letter-spacing: 1px; }
.q2 { width: 111px; display: flex; align-items: center; letter-spacing: 1.5px; }
.q3 { flex: 1; text-align: right; letter-spacing: 1.5px; }
.tri { width: 0; height: 0; border-left: 10px solid transparent; border-right: 10px solid transparent; border-top: 19px solid #00e600; margin-right: 1px; }

.lab { font-size: 23px; color: #bdbdbd; white-space: nowrap; font-weight: 400; font-family: "Noto Sans CJK SC", sans-serif; }
.num { font-weight: 700; font-size: 21px; text-align: right; white-space: nowrap; font-family: "Liberation Sans", sans-serif; }
.u { font-weight: 400; font-size: 23px; font-family: "Noto Sans CJK SC", sans-serif; line-height: 1; }
.yen { font-style: normal; font-size: 19px; margin-left: 3px; }
.r { color: #ff3232; }
.g { color: #00e600; }
.y { color: #c0c000; }
.w { color: #fff; }
.m { color: #c000c0; }
.gy { color: #c0c0c0; }

.book-row {
  display: grid;
  grid-template-columns: 110px 50px 1fr;
  height: 27px;
  line-height: 27px;
  padding: 0 3px;
  align-items: center;
}
.book-row .num:last-child { padding-right: 1px; }
.midline { height: 2px; background: linear-gradient(90deg, #b07a20 0 143px, #2a6ea8 143px); }
.book.pad { padding: 1px 0 1px; height: 139px; }

.stats.s1 { height: 146px; padding-bottom: 1px; }
.stats.s2 { height: 93px; }
.stat-row {
  display: grid;
  grid-template-columns: 100px 60px 60px 1fr;
  height: 28.5px;
  line-height: 28.5px;
  padding: 0 3px;
  align-items: center;
}
.l2 { margin-left: 8px; }

.flows { height: 119px; }
.flow-row {
  display: grid;
  grid-template-columns: 138px 40px 89px 62px;
  height: 28.4px;
  line-height: 28.4px;
  padding-left: 3px;
  align-items: center;
}
.bar-cell { display: flex; align-items: center; }
.bar-g { display: block; height: 10px; background: #00e600; }
.bar-r { display: block; height: 10px; background: #ff3232; }

.ticks { padding-top: 1px; }
.tick-row {
  display: grid;
  grid-template-columns: 52px 103px 94px 50px 28px;
  height: 27px;
  line-height: 27px;
  padding-left: 3px;
  align-items: center;
}
.tick-row .num:first-child { text-align: left; }
.bs { padding-left: 17px; font-size: 21px; }

/* icon toolbar */
.toolbar {
  flex: 1;
  background: #f0f0f0;
  display: flex;
  flex-direction: column;
  align-items: stretch;
  border-left: 1px solid #ddd;
}
.it { height: 34.5px; flex: none; display: flex; align-items: center; justify-content: center; box-sizing: border-box; }
.it:first-child { margin-top: -2px; }
.ic { width: 24px; height: 24px; }
.arrow { fill: #fff; stroke: #4f90e8; stroke-width: 1.5; }
.frame { fill: #fff; stroke: #5a9bf0; stroke-width: 1.5; }
.ic-t { fill: #2a5ac8; font-size: 11px; font-family: "Liberation Sans", sans-serif; }
.ic-t.big { font-size: 15px; }
.ic-z { fill: #f07a30; font-size: 15px; font-weight: 700; font-family: "Noto Sans CJK SC", sans-serif; }
.ic-f { fill: #1a4ab0; font-size: 11px; font-style: italic; font-family: "Liberation Serif", serif; }
.ic-s { fill: #c01818; font-size: 17px; font-weight: 700; text-anchor: middle; font-family: "Liberation Sans", sans-serif; }
.rsi { color: #3a50b0; font-weight: 700; font-size: 15px; }
.sep { height: 12px; flex: none; display: flex; align-items: center; }
.sep::before { content: ""; display: block; width: 100%; height: 1px; margin: 0 3px; background: #b8b8b8; }
.it.txt { color: #2a55a8; font-size: 19px; font-family: "Liberation Sans", "Noto Sans CJK SC", sans-serif; }
.it.active { background: #f8f8f8; box-shadow: inset 2px 2px 0 #b0b0b0; height: 44px; margin: -5px 0 -4.5px 2px; }

/* status bar */
.status {
  height: 37px;
  flex: none;
  display: flex;
  align-items: center;
  background: #f0f0f0;
  white-space: nowrap;
  font-size: 21px;
  font-weight: 700;
  color: #111;
}
.st-ic { width: 22px; height: 22px; margin-left: 2px; margin-right: 1px; flex: none; }
.st { flex: none; }
.st-l { font-size: 23px; font-weight: 400; color: #222; font-family: "Noto Sans CJK SC", sans-serif; }
.st-r { color: #f01010; }
.st-g { color: #0a8a10; }
.st-k { color: #111; }
.st-u { font-size: 23px; font-weight: 400; font-family: "Noto Sans CJK SC", sans-serif; }

/* site watermark pasted over the lower right corner */
.wm {
  position: absolute;
  left: 1080px;
  top: 1286px;
  width: 1080px;
  height: 109px;
  background: #7fadd9;
  border-bottom: 1px solid #6b98c4;
  box-sizing: border-box;
  display: flex;
  align-items: center;
}
.wm-ghost {
  position: absolute;
  left: 0;
  bottom: 0;
  font-size: 21px;
  color: #7aa6d2;
  white-space: nowrap;
}
.wm-cn {
  margin-left: 19px;
  width: 414px;
  margin-top: -2px;
  font-family: "Noto Sans CJK SC", sans-serif;
  font-weight: 900;
  font-size: 76px;
  line-height: 80px;
  color: #180a8c;
  white-space: nowrap;
  position: relative;
}
.wm-logo { width: 104px; height: 106px; flex: none; position: relative; }
.wm-url {
  margin-left: 40px;
  margin-top: -16px;
  font-family: "DejaVu Serif", serif;
  font-weight: 700;
  font-size: 70.5px;
  letter-spacing: -.6px;
  color: #f8f8f8;
  white-space: nowrap;
  position: relative;
}
</style>

<style>
html, body { margin: 0; background: #000; }
</style>
